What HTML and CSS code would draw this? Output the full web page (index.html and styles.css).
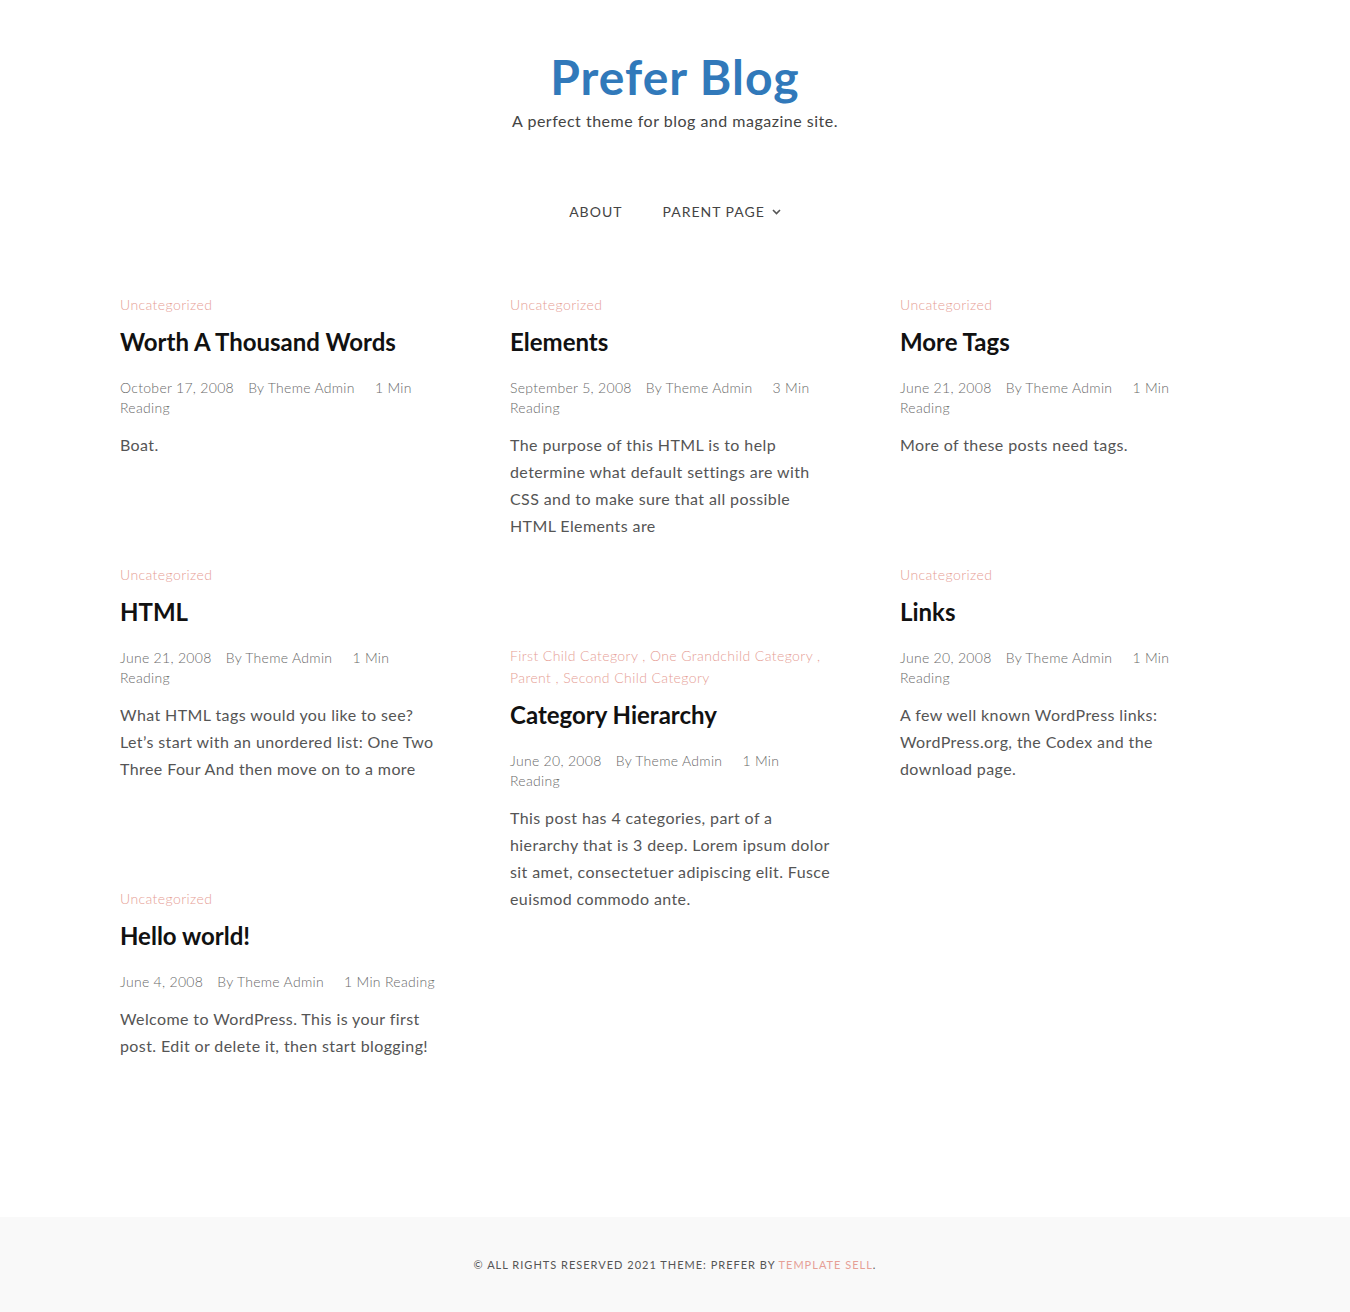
FILE: index.html
```html
<!DOCTYPE html>
<html lang="en">
<head>
<meta charset="utf-8">
<title>Prefer Blog</title>
<link rel="stylesheet" href="styles.css">
</head>
<body>
<header class="site-header">
  <h1 class="site-title"><a href="#">Prefer Blog</a></h1>
  <p class="site-desc">A perfect theme for blog and magazine site.</p>
  <nav class="main-nav">
    <a href="#" class="nav-item">About</a>
    <a href="#" class="nav-item">Parent Page
      <svg class="chev" width="9" height="6" viewBox="0 0 9 6"><path d="M1 1l3.5 3.5L8 1" fill="none" stroke="#555" stroke-width="1.6"/></svg>
    </a>
  </nav>
</header>

<main class="posts">
  <div class="col">
    <article class="post">
      <div class="cats"><a href="#">Uncategorized</a></div>
      <h2 class="post-title">Worth A Thousand Words</h2>
      <div class="meta"><span class="date">October 17, 2008</span> <span class="author">By Theme Admin</span> <span>1 Min</span> <span>Reading</span></div>
      <p class="excerpt">Boat.</p>
    </article>
    <article class="post">
      <div class="cats"><a href="#">Uncategorized</a></div>
      <h2 class="post-title">HTML</h2>
      <div class="meta"><span class="date">June 21, 2008</span> <span class="author">By Theme Admin</span> <span>1 Min</span> <span>Reading</span></div>
      <p class="excerpt">What HTML tags would you like to see? Let’s start with an unordered list: One Two Three Four And then move on to a more</p>
    </article>
    <article class="post">
      <div class="cats"><a href="#">Uncategorized</a></div>
      <h2 class="post-title">Hello world!</h2>
      <div class="meta"><span class="date">June 4, 2008</span> <span class="author">By Theme Admin</span> <span>1 Min</span> <span>Reading</span></div>
      <p class="excerpt">Welcome to WordPress. This is your first post. Edit or delete it, then start blogging!</p>
    </article>
  </div>
  <div class="col">
    <article class="post">
      <div class="cats"><a href="#">Uncategorized</a></div>
      <h2 class="post-title">Elements</h2>
      <div class="meta"><span class="date">September 5, 2008</span> <span class="author">By Theme Admin</span> <span>3 Min</span> <span>Reading</span></div>
      <p class="excerpt">The purpose of this HTML is to help determine what default settings are with CSS and to make sure that all possible HTML Elements are</p>
    </article>
    <article class="post">
      <div class="cats"><a href="#">First Child Category</a> , <a href="#">One Grandchild Category</a> , <a href="#">Parent</a> , <a href="#">Second Child Category</a></div>
      <h2 class="post-title">Category Hierarchy</h2>
      <div class="meta"><span class="date">June 20, 2008</span> <span class="author">By Theme Admin</span> <span>1 Min</span> <span>Reading</span></div>
      <p class="excerpt">This post has 4 categories, part of a hierarchy that is 3 deep. Lorem ipsum dolor sit amet, consectetuer adipiscing elit. Fusce euismod commodo ante.</p>
    </article>
  </div>
  <div class="col">
    <article class="post">
      <div class="cats"><a href="#">Uncategorized</a></div>
      <h2 class="post-title">More Tags</h2>
      <div class="meta"><span class="date">June 21, 2008</span> <span class="author">By Theme Admin</span> <span>1 Min</span> <span>Reading</span></div>
      <p class="excerpt">More of these posts need tags.</p>
    </article>
    <article class="post">
      <div class="cats"><a href="#">Uncategorized</a></div>
      <h2 class="post-title">Links</h2>
      <div class="meta"><span class="date">June 20, 2008</span> <span class="author">By Theme Admin</span> <span>1 Min</span> <span>Reading</span></div>
      <p class="excerpt">A few well known WordPress links: WordPress.org, the Codex and the download page.</p>
    </article>
  </div>
</main>

<footer class="site-footer">
  <p>© All Rights Reserved 2021 Theme: Prefer by <a href="#">Template Sell</a>.</p>
</footer>
</body>
</html>
```

FILE: styles.css
```css
* { box-sizing: border-box; }
html, body { margin: 0; padding: 0; }
body {
  font-family: "Lato", "Open Sans", sans-serif;
  color: #555;
  background: #fff;
  min-height: 1312px;
  display: flex;
  flex-direction: column;
}
a { text-decoration: none; color: inherit; }

.site-header {
  text-align: center;
  padding-top: 47px;
}
.site-title {
  margin: 0;
  font-family: "Lato", sans-serif;
  font-weight: 700;
  font-size: 48px;
  line-height: 60px;
  letter-spacing: 1px;
}
.site-title a { color: #3179ba; }
.site-desc {
  margin: 2px 0 0;
  font-size: 16px;
  line-height: 24px;
  color: #444;
  letter-spacing: 0.5px;
}
.main-nav {
  display: flex;
  justify-content: center;
  gap: 40px;
  margin-top: 68px;
}
.nav-item {
  font-size: 14px;
  line-height: 22px;
  text-transform: uppercase;
  letter-spacing: 1px;
  color: #444;
  display: inline-flex;
  align-items: center;
  gap: 7px;
}

.posts {
  width: 1110px;
  margin: 71px auto 0;
  display: flex;
  gap: 69px;
  align-items: flex-start;
}
.col {
  width: 321px;
  display: flex;
  flex-direction: column;
  gap: 106px;
}
.cats {
  font-size: 14px;
  line-height: 22px;
  color: #e6a096;
  font-weight: 300;
  letter-spacing: 0.4px;
}
.cats a { color: #e6a096; }
.post-title {
  margin: 11px 0 0;
  font-family: "Lato", sans-serif;
  font-weight: 700;
  font-size: 24px;
  line-height: 30px;
  color: #111;
}
.meta {
  margin-top: 21px;
  font-size: 14px;
  line-height: 20px;
  color: #6a6a6a;
  font-weight: 300;
  letter-spacing: 0.3px;
}
.meta .date { margin-right: 10px; }
.meta .author { margin-right: 16px; }
.excerpt {
  margin: 13px 0 0;
  font-size: 16px;
  line-height: 27px;
  color: #555;
  letter-spacing: 0.4px;
}

.site-footer {
  margin-top: auto;
  background: #f9f9f9;
  height: 95px;
  display: flex;
  align-items: center;
  justify-content: center;
}
.site-footer p {
  margin: 0;
  font-size: 11px;
  letter-spacing: 1px;
  text-transform: uppercase;
  color: #555;
}
.site-footer a { color: #e6a096; }
```
